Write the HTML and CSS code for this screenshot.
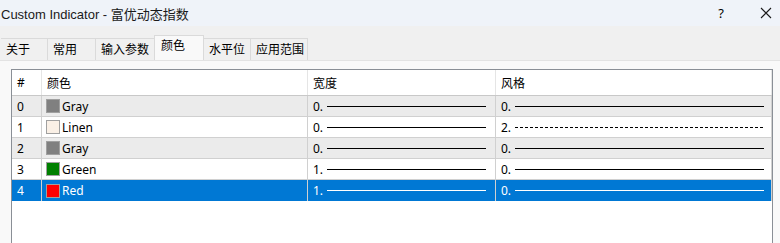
FILE: index.html
```html
<!DOCTYPE html>
<html lang="zh-CN">
<head>
    <meta charset="UTF-8">
    <title>Custom Indicator - 富优动态指数</title>
    <link rel="stylesheet" href="styles.css">
</head>
<body>
    <div class="titlebar">
        <span class="titlebar__text">Custom Indicator - 富优动态指数</span>
        <span class="titlebar__help">?</span>
        <span class="titlebar__close">
            <svg width="12" height="12" viewBox="0 0 12 12">
                <path d="M1 1L11 11M11 1L1 11" stroke="#1a1a1a" stroke-width="1.1" fill="none"/>
            </svg>
        </span>
    </div>
    <div class="tabs">
        <div class="tabs__item" style="width: 47px">关于</div>
        <div class="tabs__item" style="width: 48px">常用</div>
        <div class="tabs__item" style="width: 59px">输入参数</div>
        <div class="tabs__item tabs__item--active" style="width: 50px">颜色</div>
        <div class="tabs__item" style="width: 47px">水平位</div>
        <div class="tabs__item" style="width: 57px">应用范围</div>
    </div>
    <div class="panel">
        <div class="grid">
            <div class="grid__row grid__row--head">
                <div class="grid__cell">#</div>
                <div class="grid__cell">颜色</div>
                <div class="grid__cell">宽度</div>
                <div class="grid__cell">风格</div>
            </div>
            <div class="grid__row grid__row--odd">
                <div class="grid__cell">0</div>
                <div class="grid__cell"><span class="swatch" style="background: #808080"></span>Gray</div>
                <div class="grid__cell">0.<span class="line line--w"></span></div>
                <div class="grid__cell">0.<span class="line line--s"></span></div>
            </div>
            <div class="grid__row">
                <div class="grid__cell">1</div>
                <div class="grid__cell"><span class="swatch" style="background: #faf0e6"></span>Linen</div>
                <div class="grid__cell">0.<span class="line line--w"></span></div>
                <div class="grid__cell">2.<span class="line line--s line--dash"></span></div>
            </div>
            <div class="grid__row grid__row--odd">
                <div class="grid__cell">2</div>
                <div class="grid__cell"><span class="swatch" style="background: #808080"></span>Gray</div>
                <div class="grid__cell">0.<span class="line line--w"></span></div>
                <div class="grid__cell">0.<span class="line line--s"></span></div>
            </div>
            <div class="grid__row">
                <div class="grid__cell">3</div>
                <div class="grid__cell"><span class="swatch" style="background: #008000"></span>Green</div>
                <div class="grid__cell">1.<span class="line line--w"></span></div>
                <div class="grid__cell">0.<span class="line line--s"></span></div>
            </div>
            <div class="grid__row grid__row--selected">
                <div class="grid__cell">4</div>
                <div class="grid__cell"><span class="swatch" style="background: #ff0000"></span>Red</div>
                <div class="grid__cell">1.<span class="line line--w"></span></div>
                <div class="grid__cell">0.<span class="line line--s"></span></div>
            </div>
        </div>
    </div>
</body>
</html>
```

FILE: styles.css
```css
body {
    margin: 0;
    padding: 0;
    width: 780px;
    height: 243px;
    overflow: hidden;
    background-color: #f0f0f0;
    color: #000000;
    font-family: "Noto Sans", "Noto Sans CJK SC", sans-serif;
    font-size: 12px;
}

.titlebar {
    height: 26px;
    background-color: #eff3f9;
    display: flex;
    align-items: center;
}

.titlebar__text {
    margin-left: 1px;
    font-family: "Liberation Sans", "Noto Sans CJK SC", sans-serif;
    font-size: 13px;
    color: #1a1a1a;
}

.titlebar__help {
    margin-left: auto;
    margin-right: 36px;
    font-size: 13px;
}

.titlebar__close {
    display: flex;
    margin-right: 8px;
}

.tabs {
    display: flex;
    align-items: flex-end;
    height: 34px;
    padding-left: 1px;
    box-sizing: border-box;
}

.tabs__item {
    height: 22px;
    box-sizing: border-box;
    border: 1px solid #dadada;
    border-bottom: none;
    border-left: none;
    background-color: #f0f0f0;
    padding-left: 5px;
    line-height: 21px;
    font-size: 12px;
}

.tabs__item--active {
    height: 25px;
    background-color: #f9f9f9;
    border-left: 1px solid #dadada;
    line-height: 19px;
    padding-left: 6px;
    margin-left: -1px;
}

.panel {
    background-color: #f9f9f9;
    height: 183px;
    padding: 8px 7px 0 11px;
    border-top: 1px solid #e3e3e3;
}

.grid {
    background-color: #ffffff;
    border: 1px solid #8a8f96;
    border-bottom: none;
    height: 183px;
}

.grid__row {
    display: grid;
    grid-template-columns: 30px 266px 188px 276px;
    height: 21px;
    border-bottom: 1px solid #d0d0d0;
    box-sizing: border-box;
}

.grid__row--head {
    height: 26px;
    border-bottom-color: #c8c8c8;
}

.grid__row--odd {
    background-color: #ebebeb;
}

.grid__row--selected {
    background-color: #0078d4;
    color: #ffffff;
    border-bottom: none;
}

.grid__cell {
    display: flex;
    align-items: center;
    padding-left: 5px;
    border-right: 1px solid #d0d0d0;
    white-space: nowrap;
}

.grid__row--head .grid__cell {
    border-right-color: #e5e5e5;
}

.grid__row .grid__cell:nth-child(2) {
    padding-left: 4px;
}

.grid__row--head .grid__cell:nth-child(2) {
    padding-left: 5px;
}

.swatch {
    width: 12px;
    height: 12px;
    border: 1px solid #a0a0a0;
    margin-right: 2px;
    flex-shrink: 0;
}

.line {
    display: block;
    height: 0;
    border-top: 1px solid #000000;
    margin-left: 4px;
}

.line--w {
    width: 159px;
}

.line--s {
    width: 249px;
}

.line--dash {
    border-top: none;
    height: 1px;
    background: repeating-linear-gradient(90deg, #000000 0 3px, transparent 3px 5px);
}

.grid__row--selected .line {
    border-top-color: #ffffff;
}
```
